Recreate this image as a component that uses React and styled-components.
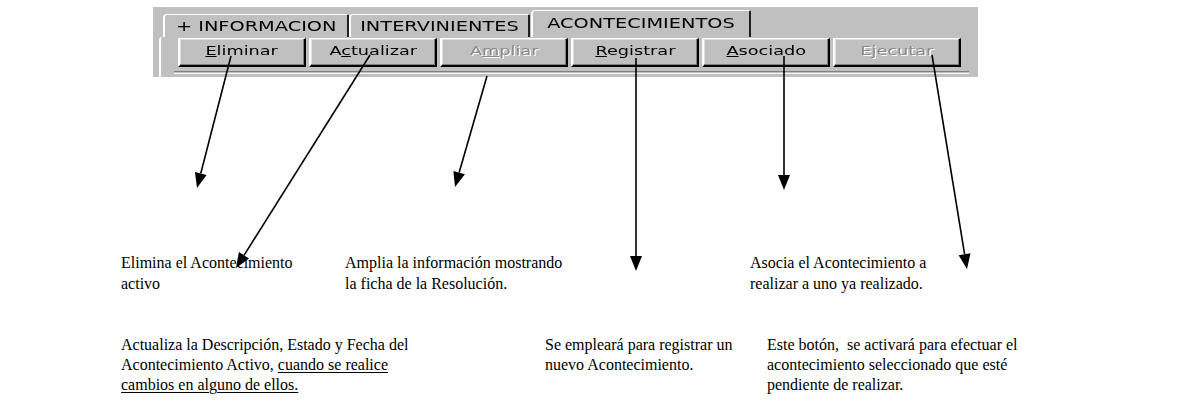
import React from "react";
import styled, { createGlobalStyle } from "styled-components";

const GlobalStyle = createGlobalStyle`
  html, body {
    margin: 0;
    padding: 0;
    background: #ffffff;
  }
`;

const Page = styled.div`
  position: relative;
  width: 1180px;
  height: 408px;
  overflow: hidden;
  background: #fff;
  font-family: "Liberation Serif", "Times New Roman", serif;
  color: #000;
`;

// Win98 style tab panel (the screenshot is stretched sideways)
const Panel = styled.div`
  margin: 7px 0 0 153px;
  width: 825px;
  height: 70px;
  background: #c0c0c0;
  display: flex;
  flex-direction: column;
  font-family: "DejaVu Sans", Verdana, sans-serif;
`;

const TabStrip = styled.div`
  display: flex;
  align-items: flex-end;
  height: 30px;
  padding-left: 10px;
`;

const Tab = styled.div`
  box-sizing: border-box;
  width: ${(p) => p.$w}px;
  height: ${(p) => (p.$active ? 27 : 23)}px;
  margin: ${(p) => (p.$active ? "0 -1px 0 1px" : "0")};
  display: flex;
  align-items: flex-end;
  justify-content: center;
  padding-bottom: ${(p) => (p.$active ? 5 : 2)}px;
  color: #000;
  border-top: 1px solid #fff;
  border-left: 2px solid #fff;
  border-right: 2px solid #202020;
  border-top-left-radius: 4px;
  border-top-right-radius: 2px;
  white-space: nowrap;
`;

const Stretch = styled.span`
  display: inline-block;
  font-size: ${(p) => p.$size}px;
  line-height: 1.2;
  transform: scaleX(${(p) => p.$sx});
  white-space: nowrap;

  u {
    text-decoration-thickness: 1px;
    text-underline-offset: 1px;
  }
`;

const Body = styled.div`
  flex: 1;
  margin-left: 6px;
  border-left: 2px solid #fff;
  border-top-left-radius: 3px;
  display: flex;
  flex-direction: column;
`;

const ButtonRow = styled.div`
  display: flex;
  gap: 3px;
  padding: 1px 0 0 17px;
`;

const Button = styled.div`
  box-sizing: border-box;
  width: 128px;
  height: 29px;
  display: flex;
  align-items: center;
  justify-content: center;
  padding-bottom: 2px;
  background: #c0c0c0;
  border-top: 1px solid #fff;
  border-left: 2px solid #fff;
  border-right: 2px solid #000;
  border-bottom: 2px solid #000;
  box-shadow: inset -1px -1px 0 #808080, inset 1px 1px 0 #dfdfdf;
  color: ${(p) => (p.$disabled ? "#8a8a8a" : "#000")};
  text-shadow: ${(p) => (p.$disabled ? "1px 1px 0 #fff" : "none")};
`;

const FrameEdge = styled.div`
  margin: 4px 9px 0 13px;
  height: 1px;
  border-top: 1px solid #808080;
  border-bottom: 1px solid #f4f4f4;
`;

const Notes = styled.div`
  display: grid;
  grid-template-columns: ${(p) => p.$cols};
  padding-left: 121px;
  margin-top: ${(p) => p.$top}px;
  font-size: 16px;
  line-height: ${(p) => p.$lh}px;
`;

const Note = styled.div`
  white-space: pre;

  u {
    text-decoration-thickness: 1px;
    text-underline-offset: 2px;
  }
`;

const Arrows = styled.svg`
  position: absolute;
  left: 0;
  top: 0;
  pointer-events: none;
`;

const arrows = [
  [231, 56, 197, 188],
  [370, 55, 236, 268],
  [487, 76, 455, 187],
  [636, 58, 636, 271],
  [784, 56, 784, 190],
  [932, 55, 967, 269],
];

const Arrow = ({ x1, y1, x2, y2 }) => {
  const dx = x2 - x1;
  const dy = y2 - y1;
  const len = Math.sqrt(dx * dx + dy * dy);
  const ux = dx / len;
  const uy = dy / len;
  const hl = 15;
  const hw = 6;
  const bx = x2 - ux * hl;
  const by = y2 - uy * hl;
  const pts = `${x2},${y2} ${bx - uy * hw},${by + ux * hw} ${bx + uy * hw},${by - ux * hw}`;
  return (
    <g>
      <line x1={x1} y1={y1} x2={bx} y2={by} stroke="#000" strokeWidth="1.6" />
      <polygon points={pts} fill="#000" />
    </g>
  );
};

const tabs = [
  { label: "+ INFORMACION", w: 186 },
  { label: "INTERVINIENTES", w: 181 },
  { label: "ACONTECIMIENTOS", w: 220, active: true },
];

const Label = ({ children }) => (
  <Stretch $size={13} $sx={1.36}>
    {children}
  </Stretch>
);

export default function App() {
  return (
    <Page>
      <GlobalStyle />
      <Panel>
        <TabStrip>
          {tabs.map((t) => (
            <Tab key={t.label} $w={t.w} $active={t.active}>
              <Stretch $size={14} $sx={1.38}>
                {t.label}
              </Stretch>
            </Tab>
          ))}
        </TabStrip>
        <Body>
          <ButtonRow>
            <Button><Label><u>E</u>liminar</Label></Button>
            <Button><Label>A<u>c</u>tualizar</Label></Button>
            <Button $disabled><Label>A<u>m</u>pliar</Label></Button>
            <Button><Label><u>R</u>egistrar</Label></Button>
            <Button><Label><u>A</u>sociado</Label></Button>
            <Button $disabled><Label>E<u>j</u>ecutar</Label></Button>
          </ButtonRow>
          <FrameEdge />
        </Body>
      </Panel>

      <Notes $cols="224px 405px 1fr" $top={175} $lh={21}>
        <Note>{"Elimina el Acontecimiento\nactivo"}</Note>
        <Note>{"Amplia la información mostrando\nla ficha de la Resolución."}</Note>
        <Note>{"Asocia el Acontecimiento a\nrealizar a uno ya realizado."}</Note>
      </Notes>

      <Notes $cols="424px 222px 1fr" $top={41} $lh={20}>
        <Note>
          {"Actualiza la Descripción, Estado y Fecha del\nAcontecimiento Activo, "}
          <u>cuando se realice</u>
          {"\n"}
          <u>cambios en alguno de ellos.</u>
        </Note>
        <Note>{"Se empleará para registrar un\nnuevo Acontecimiento."}</Note>
        <Note>{"Este botón,  se activará para efectuar el\nacontecimiento seleccionado que esté\npendiente de realizar."}</Note>
      </Notes>

      <Arrows width="1180" height="408" viewBox="0 0 1180 408">
        {arrows.map(([x1, y1, x2, y2], i) => (
          <Arrow key={i} x1={x1} y1={y1} x2={x2} y2={y2} />
        ))}
      </Arrows>
    </Page>
  );
}
